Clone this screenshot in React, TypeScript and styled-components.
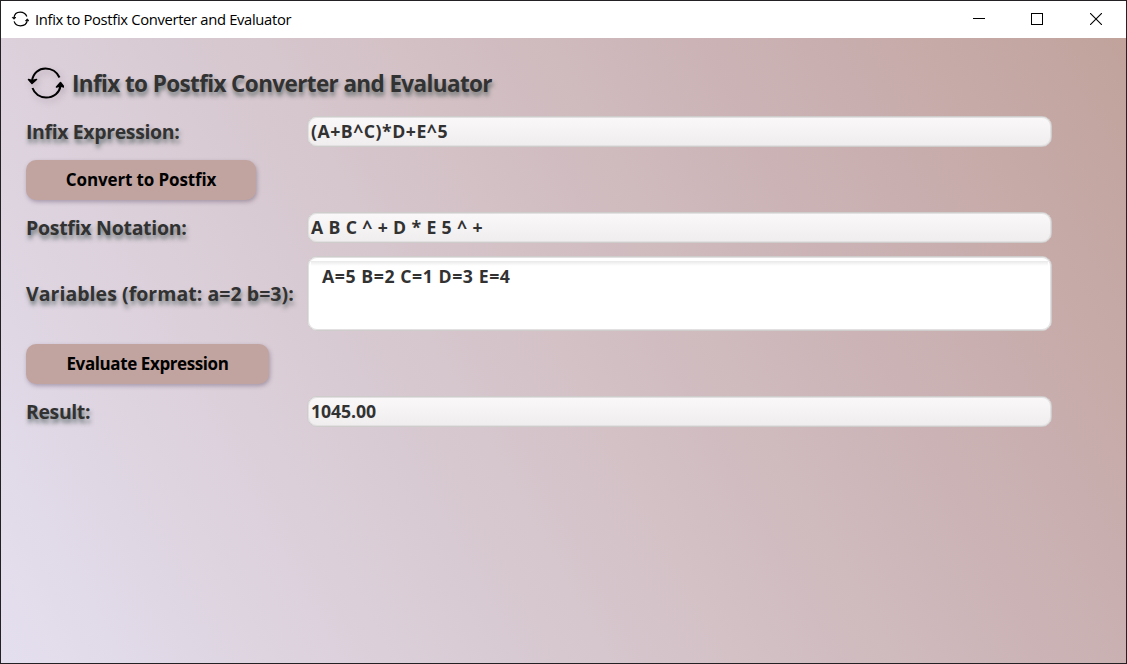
import React from "react";
import styled, { createGlobalStyle } from "styled-components";

const Global = createGlobalStyle`
  * { box-sizing: border-box; }
  html, body { margin: 0; height: 100%; }
  #root { height: 100vh; }
`;

const Window = styled.div`
  display: flex;
  flex-direction: column;
  height: 100vh;
  border: 1px solid #232123;
  overflow: hidden;
  font-family: "Open Sans", "Noto Sans", sans-serif;
  color: #323232;
`;

const TitleBar = styled.header`
  display: flex;
  align-items: flex-start;
  flex: none;
  height: 37px;
  padding-left: 10px;
  background: #fff;
  > svg { margin-top: 10px; }
`;

const Caption = styled.span`
  flex: 1;
  margin: 8px 0 0 6px;
  font-size: 14.8px;
  line-height: 20px;
  color: #000;
  letter-spacing: -0.34px;
  white-space: nowrap;
`;

const Controls = styled.div`
  display: flex;
  margin-right: 1px;
`;

const ControlButton = styled.button`
  display: flex;
  align-items: center;
  justify-content: center;
  width: 58.5px;
  height: 36px;
  padding: 0;
  border: 0;
  background: none;
`;

const Content = styled.main`
  flex: 1;
  padding: 26px 74px 0 25px;
  background: linear-gradient(60.95deg, #e4dfef 0%, #d3c1c6 50%, #c9afb0 78%, #c1a39c 100%);
`;

const Heading = styled.h1<{ $spacing: number }>`
  display: flex;
  align-items: center;
  gap: 8px;
  height: 39px;
  margin: 0 0 13px;
  font-size: 22.5px;
  font-weight: 700;
  white-space: nowrap;
  letter-spacing: ${(p) => p.$spacing}px;
  text-shadow: 1px 4px 4px rgba(60, 80, 75, 0.68);
  svg { filter: drop-shadow(2px 3px 3px rgba(90, 70, 90, 0.3)); }
`;

const Form = styled.div`
  display: grid;
  grid-template-columns: 281px 1fr;
  grid-template-rows: 32px 40px 32px 76px 40px 32px;
  row-gap: 12px;
  align-items: start;
`;

const Label = styled.label<{ $spacing: number }>`
  align-self: center;
  font-size: 19.5px;
  line-height: 26px;
  font-weight: 700;
  white-space: nowrap;
  letter-spacing: ${(p) => p.$spacing}px;
  text-shadow: 1px 4px 4px rgba(60, 80, 75, 0.68);
`;

const Field = styled.div<{ $spacing: number; $wordSpacing?: number }>`
  height: 31px;
  padding: 1px 3px;
  border: 1px solid #cfcccc;
  border-radius: 10px;
  background: linear-gradient(#faf8f9, #efedee);
  box-shadow: inset 0 0 0 1px #e2e0e0;
  font-size: 17.7px;
  line-height: 27px;
  font-weight: 700;
  white-space: pre;
  letter-spacing: ${(p) => p.$spacing}px;
  word-spacing: ${(p) => p.$wordSpacing ?? 0}px;
`;

const Area = styled(Field)`
  height: 75px;
  padding: 4px 3px;
  background: #fff;
`;

const AreaText = styled.div`
  height: 60px;
  padding: 0 11px;
  line-height: 30px;
  background: linear-gradient(#e9e9e9, #fff 5px);
`;

const Action = styled.button<{ $width: number; $spacing: number }>`
  grid-column: 1 / -1;
  width: ${(p) => p.$width}px;
  height: 40px;
  padding: 0 0 1px;
  border: 0;
  border-radius: 10px;
  background: #c1a49f;
  box-shadow: 1px 2px 4px rgba(80, 60, 90, 0.38);
  font: 700 17px "Open Sans", sans-serif;
  letter-spacing: ${(p) => p.$spacing}px;
  color: #000;
  white-space: nowrap;
`;

const CycleIcon = ({ width, height, stroke }: { width: number; height: number; stroke: number }) => (
  <svg width={width} height={height} viewBox="0 0 38 35" fill="none" stroke="#000" strokeWidth={stroke}>
    <path d="M6 15C7 7 13 2.500 19.500 2.500c6 0 11.500 3.500 14 9" />
    <path d="M6.500 22c2 6 7.500 9.500 13.500 9.500 8 0 13.500-5 14.500-11.500" />
    <path d="M2.500 13.500L6 17.500l4.500-4L6 14.500zM30.500 21l4-4.500 3.500 4.500-3.500-1z" fill="#000" strokeWidth="1.500" strokeLinejoin="round" />
  </svg>
);

export default function App() {
  return (
    <Window>
      <Global />
      <TitleBar>
        <CycleIcon width={18} height={16.5} stroke={2.6} />
        <Caption>Infix to Postfix Converter and Evaluator</Caption>
        <Controls>
          <ControlButton aria-label="Minimize">
            <svg width="12" height="12" shapeRendering="crispEdges"><path d="M0 5.500h12" stroke="#000" /></svg>
          </ControlButton>
          <ControlButton aria-label="Maximize">
            <svg width="12" height="12" shapeRendering="crispEdges"><path d="M.5.5h11v11H.5z" fill="none" stroke="#000" /></svg>
          </ControlButton>
          <ControlButton aria-label="Close">
            <svg width="12" height="12"><path d="M0 0l12 12M12 0L0 12" stroke="#000" strokeWidth="1.100" /></svg>
          </ControlButton>
        </Controls>
      </TitleBar>
      <Content>
        <Heading $spacing={-0.62}>
          <CycleIcon width={38} height={35} stroke={2} />
          Infix to Postfix Converter and Evaluator
        </Heading>
        <Form>
          <Label $spacing={-0.38}>Infix Expression:</Label>
          <Field $spacing={0.5}>(A+B^C)*D+E^5</Field>
          <Action $width={230} $spacing={-0.13}>Convert to Postfix</Action>
          <Label $spacing={-0.28}>Postfix Notation:</Label>
          <Field $spacing={0.7} $wordSpacing={-0.7}>A B C ^ + D * E 5 ^ +</Field>
          <Label $spacing={0.04}>Variables (format: a=2 b=3):</Label>
          <Area $spacing={0.56}><AreaText>A=5 B=2 C=1 D=3 E=4</AreaText></Area>
          <Action $width={243} $spacing={-0.4}>Evaluate Expression</Action>
          <Label $spacing={-0.4}>Result:</Label>
          <Field $spacing={-0.1}>1045.00</Field>
        </Form>
      </Content>
    </Window>
  );
}
